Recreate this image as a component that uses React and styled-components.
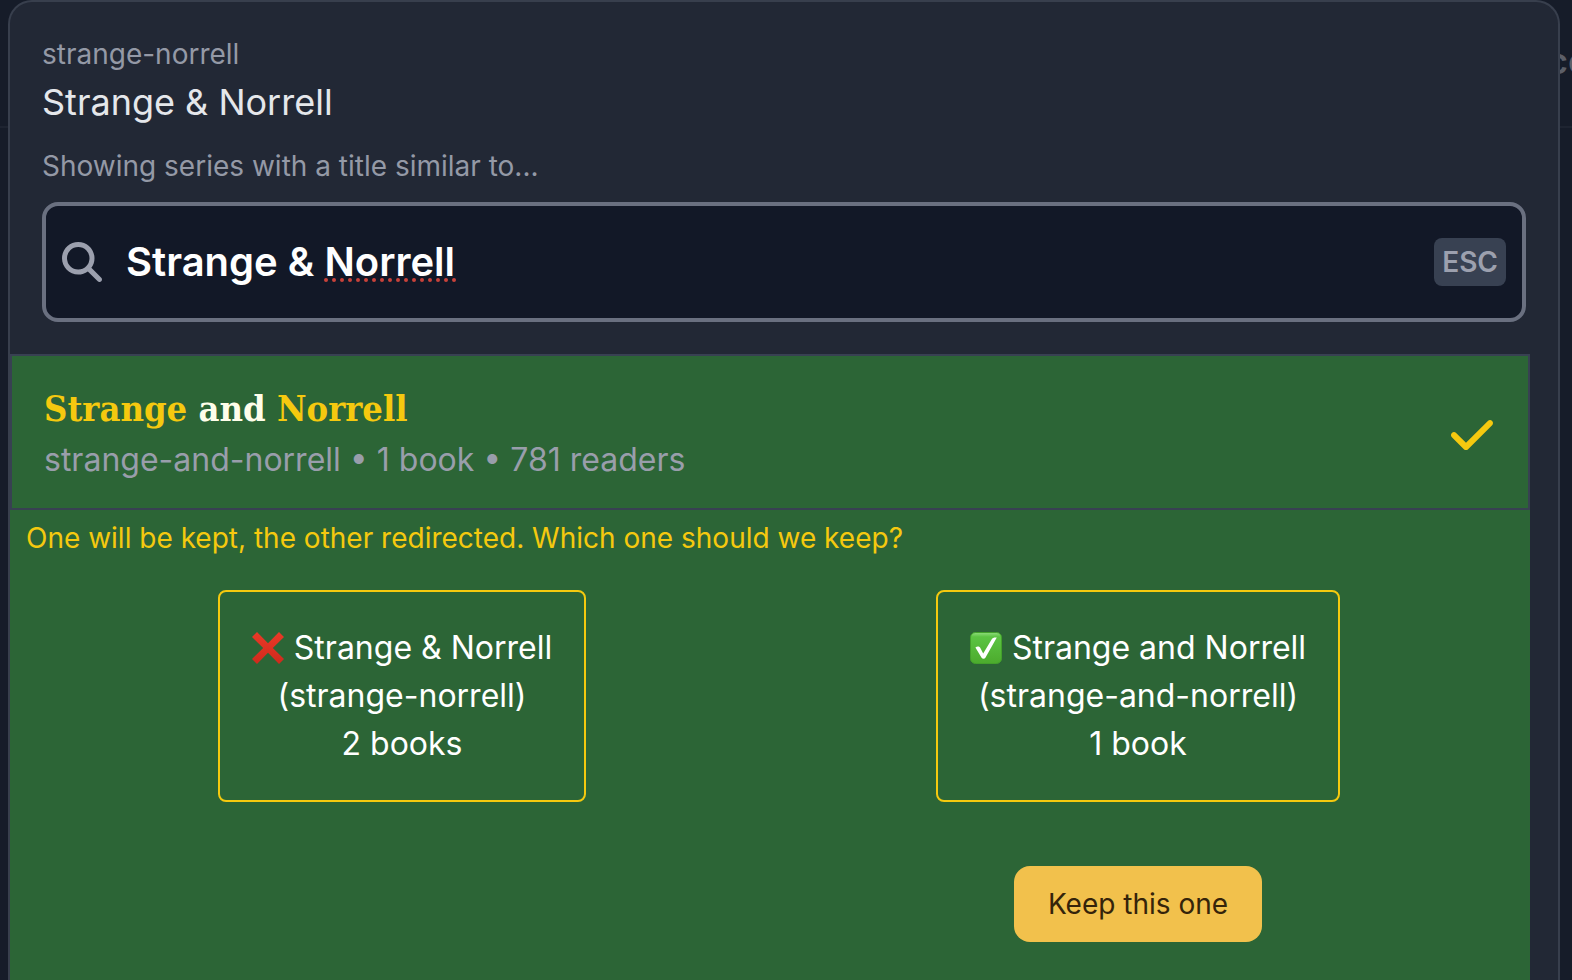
import React, { useState } from "react";
import styled, { createGlobalStyle } from "styled-components";
import { FaCheck, FaMagnifyingGlass } from "react-icons/fa6";

const GlobalStyle = createGlobalStyle`
  *, *::before, *::after { box-sizing: border-box; }
  body {
    margin: 0;
    background: #161c29;
    color: #e5e7eb;
    font-family: Inter, "Liberation Sans", sans-serif;
    font-size: 28px;
    line-height: 40px;
    overflow: hidden;
  }
  h1, h2, p { margin: 0; font-weight: 400; }
`;

const Page = styled.div`
  position: relative;
  min-height: 100vh;
  display: flex;
  flex-direction: column;
  overflow: hidden;
`;

const Backdrop = styled.header`
  position: absolute;
  inset: 0 0 auto 0;
  height: 128px;
  padding-bottom: 4px;
  display: flex;
  justify-content: flex-end;
  align-items: center;
  border-bottom: 2px solid #1e2431;
  color: #5c5f68;
  font-size: 36px;
  font-weight: 600;
`;

const BackdropLink = styled.a`
  color: inherit;
  text-decoration: none;
  margin-right: -18px;
`;

const Dialog = styled.main`
  position: relative;
  flex: 1;
  display: flex;
  flex-direction: column;
  margin: 0 12px 0 8px;
  padding-right: 28px;
  background: #222835;
  border: 2px solid #383f4d;
  border-bottom: 0;
  border-radius: 24px 24px 0 0;
`;

const Head = styled.div`
  padding: 32px 4px 32px 32px;
`;

const Muted = styled.p`
  color: #9499a6;
`;

const Title = styled.h1`
  font-size: 36px;
  line-height: 56px;
  margin-bottom: 16px;
`;

const SearchBox = styled.div`
  position: relative;
  display: flex;
  align-items: center;
  gap: 24px;
  height: 120px;
  margin-top: 16px;
  padding: 0 16px;
  border: 4px solid #6a7080;
  border-radius: 16px;
  background: #121827;
  color: #9ca0ae;
`;

const SearchField = styled.div`
  position: relative;
  flex: 1;
  display: flex;
`;

const SearchInput = styled.input`
  width: 100%;
  height: 64px;
  padding: 0 0 2px;
  border: 0;
  outline: 0;
  background: transparent;
  color: #fff;
  font: 600 40px Inter, "Liberation Sans", sans-serif;
`;

const SpellingMark = styled.svg`
  position: absolute;
  left: 198px;
  top: 48px;
  pointer-events: none;
`;

const EscButton = styled.button`
  height: 48px;
  padding: 0 8px;
  border: 0;
  border-radius: 8px;
  background: #384152;
  color: #9ca0ae;
  font: 600 28px Inter, "Liberation Sans", sans-serif;
`;

const Results = styled.section`
  flex: 1;
  background: #2c6536;
`;

const ResultRow = styled.div`
  display: flex;
  align-items: center;
  justify-content: space-between;
  padding: 24px 32px;
  border: 2px solid #384152;
  color: #f5c90f;
`;

const ResultTitle = styled.h2`
  color: #fffeea;
  font-family: "DejaVu Serif Condensed", "DejaVu Serif", serif;
  font-weight: 700;
  font-size: 36px;
  line-height: 56px;
`;

const Match = styled.span`
  color: #f5c90f;
`;

const ResultMeta = styled.p`
  color: #999eab;
  font-size: 32px;
  line-height: 48px;
`;

const SelectedIcon = styled.span`
  display: flex;
  padding-top: 6px;
`;

const Question = styled.p`
  padding: 8px 16px;
  color: #f5c90f;
`;

const Choices = styled.div`
  display: grid;
  grid-template-columns: 1fr 1fr;
  padding: 24px;
`;

const Choice = styled.div`
  display: flex;
  flex-direction: column;
  align-items: center;
  gap: 64px;
`;

const ChoiceCard = styled.div`
  padding: 32px;
  border: 2px solid #f5c90f;
  border-radius: 8px;
  color: #fff;
  font-size: 32px;
  line-height: 48px;
  text-align: center;
`;

const ChoiceName = styled.p`
  display: flex;
  align-items: center;
  gap: 10px;
`;

const KeepButton = styled.button`
  padding: 18px 34px;
  border: 0;
  border-radius: 16px;
  background: #f2c14c;
  color: #35240a;
  font: 400 28px/40px Inter, "Liberation Sans", sans-serif;
`;

function CrossMark() {
  return (
    <svg width="32" height="32" viewBox="0 0 32 32" aria-hidden="true">
      <defs>
        <linearGradient id="cross" x1="0" y1="0" x2="0" y2="1">
          <stop offset="0" stopColor="#ea3a27" />
          <stop offset="1" stopColor="#cf2a1c" />
        </linearGradient>
      </defs>
      <path d="M5 0 16 11.3 27 0 32 5 20.8 16 32 27 27 32 16 20.7 5 32 0 27 11.2 16 0 5Z" fill="url(#cross)" />
    </svg>
  );
}

function TickMark() {
  return (
    <svg width="32" height="32" viewBox="0 0 32 32" aria-hidden="true">
      <defs>
        <linearGradient id="tick" x1="0" y1="0" x2="0" y2="1">
          <stop offset="0" stopColor="#8fdc7c" />
          <stop offset="0.14" stopColor="#5cc443" />
          <stop offset="1" stopColor="#4cab2d" />
        </linearGradient>
      </defs>
      <rect x="0.5" y="0.5" width="31" height="31" rx="5" fill="url(#tick)" stroke="#43a02b" />
      <path d="M5.4 15.4C7.6 14 9.6 14.4 10.6 16.4L13.2 21.6 21.6 7.4C22.6 5.8 24.2 5.4 26.8 5.6L15.4 25.8C14.6 27.2 12.4 27.2 11.6 25.8Z" fill="#fff" />
    </svg>
  );
}

export default function App() {
  const [query, setQuery] = useState("Strange & Norrell");
  return (
    <Page>
      <GlobalStyle />
      <Backdrop>
        <BackdropLink href="#">co</BackdropLink>
      </Backdrop>
      <Dialog>
        <Head>
          <Muted>strange-norrell</Muted>
          <Title>Strange &amp; Norrell</Title>
          <Muted as="label" htmlFor="series-search">Showing series with a title similar to...</Muted>
          <SearchBox>
            <FaMagnifyingGlass size={40} aria-hidden="true" />
            <SearchField>
              <SearchInput
                id="series-search"
                type="text"
                spellCheck={false}
                value={query}
                onChange={(e) => setQuery(e.target.value)}
              />
              {query === "Strange & Norrell" && (
                <SpellingMark width="132" height="4" aria-hidden="true">
                  <line x1="2" y1="2" x2="131" y2="2" stroke="#c8423a" strokeWidth="4" strokeLinecap="round" strokeDasharray="0 8" />
                </SpellingMark>
              )}
            </SearchField>
            <EscButton type="button">ESC</EscButton>
          </SearchBox>
        </Head>
        <Results>
          <ResultRow>
            <div>
              <ResultTitle>
                <Match>Strange</Match> and <Match>Norrell</Match>
              </ResultTitle>
              <ResultMeta>strange-and-norrell • 1 book • 781 readers</ResultMeta>
            </div>
            <SelectedIcon>
              <FaCheck size={48} aria-hidden="true" />
            </SelectedIcon>
          </ResultRow>
          <Question>One will be kept, the other redirected. Which one should we keep?</Question>
          <Choices>
            <Choice>
              <ChoiceCard>
                <ChoiceName><CrossMark />Strange &amp; Norrell</ChoiceName>
                <p>(strange-norrell)</p>
                <p>2 books</p>
              </ChoiceCard>
            </Choice>
            <Choice>
              <ChoiceCard>
                <ChoiceName><TickMark />Strange and Norrell</ChoiceName>
                <p>(strange-and-norrell)</p>
                <p>1 book</p>
              </ChoiceCard>
              <KeepButton type="button">Keep this one</KeepButton>
            </Choice>
          </Choices>
        </Results>
      </Dialog>
    </Page>
  );
}
